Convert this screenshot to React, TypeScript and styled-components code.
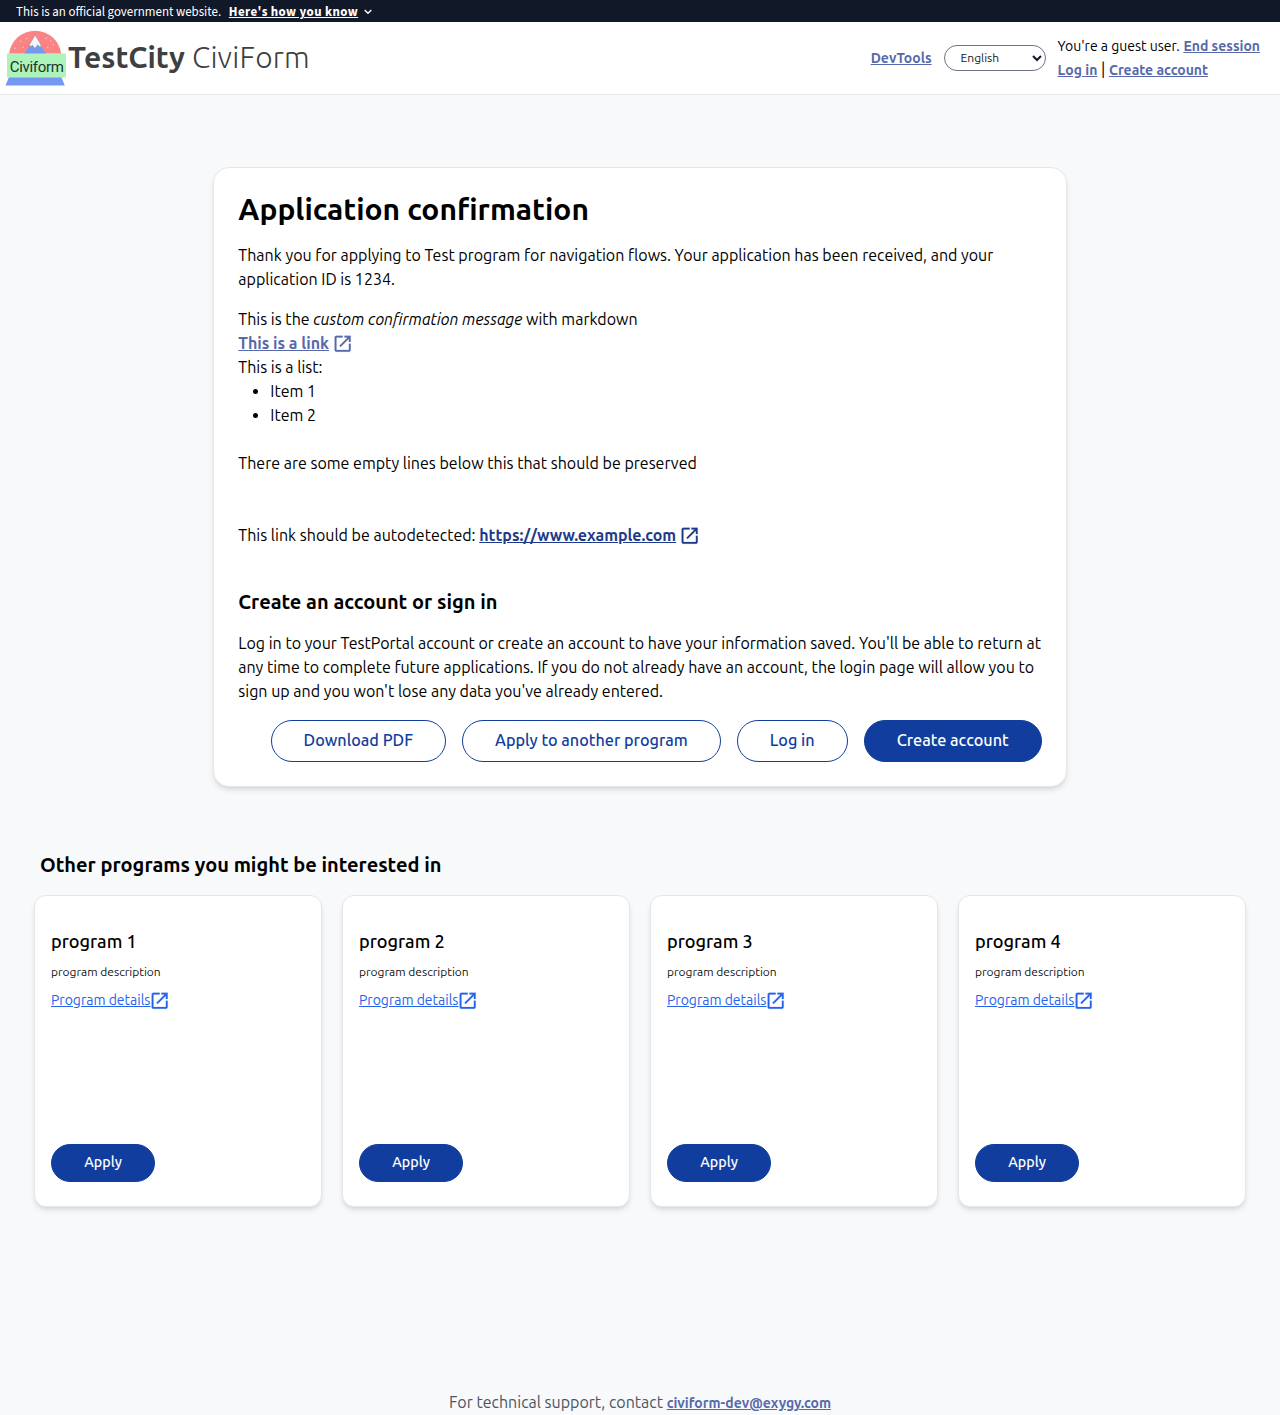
import React from "react";
import styled, { createGlobalStyle, css } from "styled-components";

const GlobalStyle = createGlobalStyle`
  *, *::before, *::after { box-sizing: border-box; }
  body {
    margin: 0;
    background: #f8f9fb;
    color: #000;
    font-family: Ubuntu, "Noto Sans", sans-serif;
    font-size: 16px;
    line-height: 24px;
  }
  h1, h2, h3, p, ul { margin: 0; }
`;

const Page = styled.div`
  display: flex;
  flex-direction: column;
  height: 1415px;
  overflow: hidden;
`;

const Banner = styled.div`
  display: flex;
  align-items: center;
  gap: 7.7px;
  flex: none;
  height: 22px;
  padding: 2px 16px 0;
  background: #111827;
  color: #fff;
  font-family: "Source Sans 3", "Noto Sans CJK SC", sans-serif;
  font-size: 12.93px;
  line-height: 20px;
`;

const BannerToggle = styled.span`
  display: inline-flex;
  align-items: center;
  gap: 6px;
`;

const BannerLabel = styled.span`
  font-weight: 700;
  letter-spacing: 0.42px;
  text-decoration: underline;
`;

const Header = styled.header`
  display: flex;
  align-items: center;
  justify-content: space-between;
  flex: none;
  height: 73px;
  padding-right: 20px;
  background: #fff;
  border-bottom: 1px solid #e5e7eb;
`;

const Brand = styled.div`
  display: flex;
  align-items: center;
`;

const BrandName = styled.div`
  padding-bottom: 2px;
  color: #403f40;
  font-size: 30px;
  font-weight: 300;
  letter-spacing: 0.2px;
  line-height: 36px;
  white-space: pre;

  b {
    font-weight: 600;
    letter-spacing: 0;
  }
`;

const HeaderTools = styled.div`
  display: flex;
  align-items: center;
  gap: 12px;
`;

const Account = styled.div`
  display: flex;
  flex-direction: column;
  padding-bottom: 2px;
  white-space: nowrap;
`;

const Small = styled.span`
  font-size: 14px;
  line-height: 16px;
`;

const Link = styled.a<{ $small?: boolean; $tone?: string }>`
  color: ${(p) => p.$tone ?? "#5769aa"};
  font-size: ${(p) => (p.$small ? 14 : 16)}px;
  font-weight: 600;
  line-height: 16px;
  text-decoration: underline;
`;

const LanguageSelect = styled.select`
  width: 102px;
  height: 26px;
  padding: 3px 0 5px 12px;
  border: 1px solid #6b7280;
  border-radius: 13px;
  background: #fff;
  color: #111827;
  font: 400 12px/16px Ubuntu, sans-serif;
`;

const Card = styled.section`
  flex: none;
  width: 853.33px;
  height: 620px;
  margin: 72px auto 0;
  padding: 23px 24px 24px;
  background: #fff;
  border: 1px solid #e5e7eb;
  border-radius: 16px;
  box-shadow: 0 4px 6px -1px rgba(0, 0, 0, 0.1), 0 2px 4px -2px rgba(0, 0, 0, 0.1);
`;

const Title = styled.h1`
  margin-bottom: 16px;
  font-size: 30px;
  font-weight: 600;
  line-height: 36px;
`;

const Paragraph = styled.p`
  margin-bottom: 16px;
`;

const Message = styled.div`
  margin-bottom: 41px;
`;

const IconLink = styled.span<{ $tone?: string }>`
  color: ${(p) => p.$tone ?? "#5769aa"};

  svg {
    margin: -2px 0 -2px 3.1px;
    vertical-align: -3.8px;
  }
`;

const List = styled.ul`
  padding-left: 32px;
  list-style: disc;
`;

const BlankLine = styled.div<{ $lines?: number }>`
  height: ${(p) => 24 * (p.$lines ?? 1)}px;
`;

const Subtitle = styled.h2`
  margin-bottom: 15px;
  font-size: 20px;
  font-weight: 600;
  line-height: 28px;
`;

const ButtonRow = styled.div`
  display: flex;
  justify-content: flex-end;
  gap: 16px;
  padding-top: 1px;
`;

const Button = styled.button<{ $outline?: boolean; $compact?: boolean }>`
  height: ${(p) => (p.$compact ? 38 : 42)}px;
  padding: 0 32px 2px;
  border: 1px solid #113e9e;
  border-radius: 21px;
  background: #113e9e;
  color: #fff;
  font-family: Ubuntu, sans-serif;
  font-size: ${(p) => (p.$compact ? 14.3 : 16.22)}px;
  font-weight: 500;
  line-height: 24px;
  white-space: nowrap;

  ${(p) =>
    p.$compact &&
    css`
      width: 104px;
    `}

  ${(p) =>
    p.$outline &&
    css`
      background: #fff;
      color: #113e9e;
    `}
`;

const Related = styled.section`
  flex: none;
  width: 1212px;
  margin: 64px auto 0;
`;

const RelatedTitle = styled(Subtitle)`
  margin: 0 0 16px 6px;
`;

const ProgramGrid = styled.div`
  display: grid;
  grid-template-columns: repeat(4, 288px);
  gap: 20px;
`;

const ProgramCard = styled.article`
  display: flex;
  flex-direction: column;
  align-items: flex-start;
  height: 312px;
  padding: 31px 16px 24px;
  background: #fff;
  border: 1px solid #e5e7eb;
  border-radius: 12px;
  box-shadow: 0 4px 6px -1px rgba(0, 0, 0, 0.1), 0 2px 4px -2px rgba(0, 0, 0, 0.1);
`;

const ProgramName = styled.h3`
  font-size: 18.15px;
  font-weight: 500;
  line-height: 28px;
`;

const ProgramText = styled.p`
  margin: 9px 0;
  color: #111;
  font-size: 12px;
  line-height: 16px;
`;

const DetailsLink = styled.a`
  display: inline-flex;
  align-items: center;
  height: 22px;
  margin-bottom: auto;
  color: #2563eb;
  font-size: 14px;
  line-height: 20px;

  span { text-decoration: underline; }
  svg { margin: 2px 0 0 -1.2px; }
`;

const Footer = styled.footer`
  margin-top: auto;
  padding-bottom: 1px;
  color: #4b5563;
  text-align: center;
  line-height: 24px;
`;

const ExternalIcon = () => (
  <svg width="21.33" height="21.33" viewBox="0 0 24 24" fill="currentColor" aria-hidden="true">
    <path d="M5 21q-.825 0-1.413-.587T3 19V5q0-.825.587-1.413T5 3h7v2H5v14h14v-7h2v7q0 .825-.587 1.413T19 21H5Zm4.7-5.3-1.4-1.4L17.6 5H14V3h7v7h-2V6.4l-9.3 9.3Z" stroke="currentColor" strokeWidth=".2" />
  </svg>
);

const stars = [
  [20.7, 41.3], [26.7, 38.5], [15, 48.3], [23.3, 47.3], [46.3, 38.5], [53.3, 45], [47.6, 47.7], [50.5, 41],
];

const Logo = () => (
  <svg width="68" height="72" viewBox="0 22 68 72" role="img" aria-label="Civiform">
    <path d="M9 53.8a26.3 26.3 0 0 1 52.2 0Z" fill="#fb8383" />
    {stars.map(([x, y]) => (
      <circle key={`${x}-${y}`} cx={x} cy={y} r=".8" fill="#fdc4c2" />
    ))}
    <path d="M35.2 37 46.3 54H24.2Z" fill="#7598f2" />
    <path d="m35.2 35 5.8 10-.6 2.6-2.7-2.8-2.8 3.8-2.4-3.3-2.2 1.5-.8-2.3Z" fill="#f5f5f7" stroke="#8b8f9d" strokeWidth=".5" />
    <path d="M9 77h52.3l3.5 8.5H5.5Z" fill="#7598f2" />
    <path d="M7 53.5h59v24H7Z" fill="#adf3bb" />
    <text x="9.8" y="71.6" fill="#22352a" fontFamily="Roboto, sans-serif" fontSize="15" textLength="54" lengthAdjust="spacing">
      Civiform
    </text>
  </svg>
);

const Chevron = () => (
  <svg width="8" height="6" viewBox="0 0 8 6" fill="none" stroke="#fff" strokeWidth="1.3" aria-hidden="true">
    <path d="m.7 1 3.3 3.3L7.3 1" />
  </svg>
);

const programs = ["program 1", "program 2", "program 3", "program 4"];

export default function App() {
  return (
    <Page>
      <GlobalStyle />
      <Banner>
        <span>This is an official government website.</span>
        <BannerToggle>
          <BannerLabel>Here's how you know</BannerLabel>
          <Chevron />
        </BannerToggle>
      </Banner>
      <Header>
        <Brand>
          <Logo />
          <BrandName>
            <b>TestCity</b> CiviForm
          </BrandName>
        </Brand>
        <HeaderTools>
          <Link $small>DevTools</Link>
          <LanguageSelect defaultValue="en" aria-label="Language">
            <option value="en">English</option>
          </LanguageSelect>
          <Account>
            <div>
              <Small>You're a guest user.</Small> <Link $small>End session</Link>
            </div>
            <div>
              <Link $small>Log in</Link> | <Link $small>Create account</Link>
            </div>
          </Account>
        </HeaderTools>
      </Header>

      <Card>
        <Title>Application confirmation</Title>
        <Paragraph>
          Thank you for applying to Test program for navigation flows. Your application has been received, and your
          application ID is 1234.
        </Paragraph>
        <Message>
          <div>
            This is the <em>custom confirmation message</em> with markdown
          </div>
          <div>
            <IconLink>
              <Link>This is a link</Link>
              <ExternalIcon />
            </IconLink>
          </div>
          <div>This is a list:</div>
          <List>
            <li>Item 1</li>
            <li>Item 2</li>
          </List>
          <BlankLine />
          <div>There are some empty lines below this that should be preserved</div>
          <BlankLine $lines={2} />
          <div>
            This link should be autodetected:{" "}
            <IconLink $tone="#1e3a8a">
              <Link $tone="#1e3a8a">https://www.example.com</Link>
              <ExternalIcon />
            </IconLink>
          </div>
        </Message>
        <Subtitle>Create an account or sign in</Subtitle>
        <Paragraph>
          Log in to your TestPortal account or create an account to have your information saved. You'll be able to
          return at any time to complete future applications. If you do not already have an account, the login page
          will allow you to sign up and you won't lose any data you've already entered.
        </Paragraph>
        <ButtonRow>
          <Button $outline>Download PDF</Button>
          <Button $outline>Apply to another program</Button>
          <Button $outline>Log in</Button>
          <Button>Create account</Button>
        </ButtonRow>
      </Card>

      <Related>
        <RelatedTitle>Other programs you might be interested in</RelatedTitle>
        <ProgramGrid>
          {programs.map((name) => (
            <ProgramCard key={name}>
              <ProgramName>{name}</ProgramName>
              <ProgramText>program description</ProgramText>
              <DetailsLink>
                <span>Program details</span>
                <ExternalIcon />
              </DetailsLink>
              <Button $compact>Apply</Button>
            </ProgramCard>
          ))}
        </ProgramGrid>
      </Related>

      <Footer>
        For technical support, contact <Link $small>civiform-dev@exygy.com</Link>
      </Footer>
    </Page>
  );
}
